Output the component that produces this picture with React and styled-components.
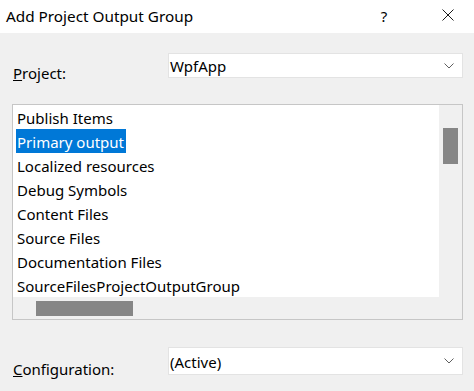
import React from "react";
import styled, { createGlobalStyle } from "styled-components";

const Global = createGlobalStyle`
  html, body { margin: 0; padding: 0; background: #f0f0f0; }
  body { font-family: "Noto Sans", "Segoe UI", sans-serif; color: #000; }
`;

const Window = styled.div`
  width: 474px;
  height: 391px;
  display: flex;
  flex-direction: column;
  background: #f0f0f0;
  overflow: hidden;
`;

const TitleBar = styled.div`
  height: 33px;
  flex: none;
  background: #fff;
  display: flex;
  align-items: center;
  padding-left: 6px;
`;

const Title = styled.div`
  flex: 1;
  font-size: 15.3px;
  line-height: 20px;
  margin-top: -1px;
`;

const HelpButton = styled.div`
  width: 20px;
  font-size: 15px;
  line-height: 20px;
  text-align: center;
  margin-right: 48px;
  margin-top: -2px;
`;

const CloseButton = styled.div`
  width: 12px;
  height: 12px;
  margin-right: 20px;
  margin-top: -4px;
  display: flex;
`;

const Body = styled.div`
  flex: 1;
  display: flex;
  flex-direction: column;
  padding: 20px 11px 0 12px;
`;

const FieldRow = styled.div`
  display: flex;
  align-items: flex-start;
  height: ${(p) => p.$h}px;
  margin-top: ${(p) => p.$top || 0}px;
`;

const Label = styled.div`
  width: 155px;
  padding-left: 1px;
  font-size: 15px;
  line-height: 20px;
  padding-top: ${(p) => p.$drop}px;
`;

const Select = styled.div`
  flex: 1;
  height: 100%;
  box-sizing: border-box;
  background: #fff;
  border: 1px solid #e3e3e3;
  display: flex;
  align-items: center;
  padding: 0 8px 0 1px;
  font-size: 15px;
`;

const SelectText = styled.div`
  flex: 1;
  margin-top: ${(p) => p.$shift}px;
`;

const ListBox = styled.div`
  margin-top: 26px;
  height: 216px;
  flex: none;
  box-sizing: border-box;
  border: 1px solid #c6c6c6;
  display: grid;
  grid-template-columns: 1fr 23px;
  grid-template-rows: 192px 1fr;
`;

const Items = styled.div`
  background: #fff;
  display: flex;
  flex-direction: column;
  padding-left: 3px;
  overflow: hidden;
`;

const Item = styled.div`
  height: 24px;
  line-height: 27px;
  font-size: 15px;
  align-self: flex-start;
  padding: 0 2px 0 1px;
  white-space: nowrap;
  overflow: hidden;
  background: ${(p) => (p.$selected ? "#0078d7" : "transparent")};
  color: ${(p) => (p.$selected ? "#fff" : "#000")};
`;

const VTrack = styled.div`
  background: #f0f0f0;
  padding: 23px 4px 0 4px;
`;

const VThumb = styled.div`
  height: 36px;
  background: #868686;
`;

const HTrack = styled.div`
  grid-column: 1 / span 2;
  background: #f0f0f0;
  padding: 4px 0 0 23px;
`;

const HThumb = styled.div`
  width: 97px;
  height: 15px;
  background: #868686;
`;

const Chevron = () => (
  <svg width="10" height="6" viewBox="0 0 10 6">
    <path d="M0.5 0.5 L5 5 L9.5 0.5" fill="none" stroke="#5f5f5f" strokeWidth="1" />
  </svg>
);

const items = [
  "Publish Items",
  "Primary output",
  "Localized resources",
  "Debug Symbols",
  "Content Files",
  "Source Files",
  "Documentation Files",
  "SourceFilesProjectOutputGroup",
];

export default function App() {
  return (
    <>
      <Global />
      <Window>
        <TitleBar>
          <Title>Add Project Output Group</Title>
          <HelpButton>?</HelpButton>
          <CloseButton>
            <svg width="12" height="12" viewBox="0 0 12 12">
              <path d="M0.5 0.5 L11.5 11.5 M11.5 0.5 L0.5 11.5" stroke="#1a1a1a" strokeWidth="1" />
            </svg>
          </CloseButton>
        </TitleBar>
        <Body>
          <FieldRow $h={25}>
            <Label $drop={10}>
              <u>P</u>roject:
            </Label>
            <Select>
              <SelectText $shift={1}>WpfApp</SelectText>
              <Chevron />
            </Select>
          </FieldRow>
          <ListBox>
            <Items>
              {items.map((t, i) => (
                <Item key={t} $selected={i === 1}>
                  {t}
                </Item>
              ))}
            </Items>
            <VTrack>
              <VThumb />
            </VTrack>
            <HTrack>
              <HThumb />
            </HTrack>
          </ListBox>
          <FieldRow $h={28} $top={27}>
            <Label $drop={12}>
              <u>C</u>onfiguration:
            </Label>
            <Select>
              <SelectText $shift={2}>(Active)</SelectText>
              <Chevron />
            </Select>
          </FieldRow>
        </Body>
      </Window>
    </>
  );
}
